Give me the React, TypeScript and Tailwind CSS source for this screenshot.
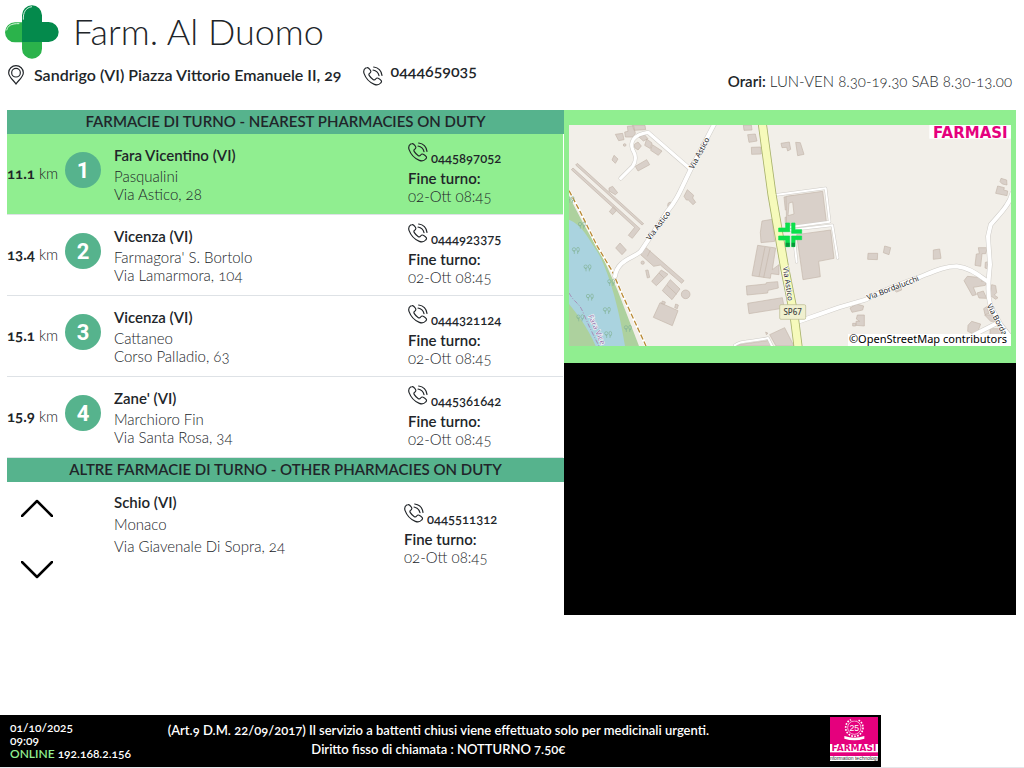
interface Pharmacy { city: string; name: string; address: string; phone: string; until: string; km?: string; }

const nearest: Pharmacy[] = [
  { km: "11.1", city: "Fara Vicentino (VI)", name: "Pasqualini", address: "Via Astico, 28", phone: "0445897052", until: "02-Ott 08:45" },
  { km: "13.4", city: "Vicenza (VI)", name: "Farmagora' S. Bortolo", address: "Via Lamarmora, 104", phone: "0444923375", until: "02-Ott 08:45" },
  { km: "15.1", city: "Vicenza (VI)", name: "Cattaneo", address: "Corso Palladio, 63", phone: "0444321124", until: "02-Ott 08:45" },
  { km: "15.9", city: "Zane' (VI)", name: "Marchioro Fin", address: "Via Santa Rosa, 34", phone: "0445361642", until: "02-Ott 08:45" },
];

const other: Pharmacy = { city: "Schio (VI)", name: "Monaco", address: "Via Giavenale Di Sopra, 24", phone: "0445511312", until: "02-Ott 08:45" };

function PhoneIcon() {
  return (
    <svg viewBox="0 0 60 60" className="size-5 shrink-0" fill="none" stroke="#212529" strokeWidth="3.5" strokeLinecap="round" strokeLinejoin="round" aria-hidden="true">
      <path d="M12 5 C15 4 18 7 21 11 C25 16 24 19 20 22 C17 24 17 26 19 29 C22 34 26 38 31 41 C34 43 36 42 38 39 C41 35 44 35 48 38 L53 42 C57 45 56 48 53 51 C48 57 42 58 34 55 C19 49 8 36 3 22 C1 15 3 9 8 6 Z" />
      <path d="M32 3 C46 5 55 14 57 28" />
      <path d="M30 12 C40 14 46 20 48 29" />
    </svg>
  );
}

function PinIcon() {
  return (
    <svg viewBox="0 0 48 60" className="h-5 w-4 shrink-0" fill="none" stroke="#212529" strokeWidth="3.5" aria-hidden="true">
      <path d="M24 57 C18 47 2 36 2 23 A22 21 0 0 1 46 23 C46 36 30 47 24 57 Z" />
      <circle cx="24" cy="23" r="13" />
    </svg>
  );
}

function CrossLogo() {
  return (
    <svg viewBox="0 0 162 162" className="size-[54px] shrink-0" aria-hidden="true">
      <path d="M51 52 H30 A30 30 0 0 0 30 112 H51 V131 A30 30 0 0 0 111 131 V111 H51 Z" fill="#2bb34b" />
      <path d="M51 31 A30 30 0 0 1 111 31 V51 H131 A30 30 0 0 1 131 111 H51 Z" fill="#048a4c" />
      <path d="M55 44 C54 22 62 8 81 5" fill="none" stroke="#d6efe0" strokeWidth="3" />
      <path d="M5 76 C8 63 18 55 43 56" fill="none" stroke="#d6f5da" strokeWidth="3" />
    </svg>
  );
}

function StreetMap() {
  return (
    <svg viewBox="15 51 1326 663" className="block w-full lining-nums" role="img" aria-label="Mappa della farmacia">
      <rect x="15" y="51" width="1326" height="663" fill="#f2efe9" />

      {/* river and woods */}
      <path d="M15 265 L60 350 L120 455 L160 545 L225 714 H15 Z" fill="#add19e" />
      <path d="M15 335 C55 350 75 395 98 428 C125 470 160 570 183 714 H95 C70 655 40 620 15 588 Z" fill="#aad3df" />
      <path d="M15 555 C35 590 45 580 60 620 C75 655 90 685 105 714" fill="none" stroke="#a68fb8" strokeWidth="3" strokeDasharray="14 5 3 5" />
      <path d="M15 248 L48 310 L100 415 L145 490 L175 560 L246 714" fill="none" stroke="#fff" strokeWidth="8" />
      <path d="M15 248 L48 310 L100 415 L145 490 L175 560 L246 714" fill="none" stroke="#b98a35" strokeWidth="4" strokeDasharray="16 7" />
      <g fill="none" stroke="#83b399" strokeWidth="2">
        {[[36, 428], [71, 480], [78, 568], [129, 608], [133, 680], [54, 352], [49, 630], [192, 662], [20, 275], [142, 524]].map(([x, y]) => (
          <g key={`${x}-${y}`} transform={`translate(${x} ${y})`}>
            <path d="M-5 10 V-1 M5 10 V1 M-5 3 L-10 -1 M5 5 L10 1" />
            <ellipse cx="-6" cy="-4" rx="5" ry="5" />
            <ellipse cx="6" cy="-4" rx="4" ry="6" />
          </g>
        ))}
      </g>

      {/* buildings, western half */}
      <g fill="#d9d0c9" stroke="#c4b6ab" strokeWidth="2">
        <path d="M154 79 L176 76 L180 95 L164 98 Z M182 72 L192 70 L190 55 L209 53 L214 76 L206 87 L184 87 Z M205 52 H243 L245 65 L210 67 Z M225 87 L241 80 L252 92 L238 99 Z M248 93 L264 105 L259 122 L242 112 Z M265 110 L294 129 L283 142 L260 127 Z M211 109 L222 102 L232 114 L222 126 L212 119 Z M214 175 L248 155 L257 170 L222 189 Z M150 142 L162 153 L154 166 L144 156 Z" />
        <circle cx="182" cy="111" r="4" />
        <path d="M35 171 L40 166 L239 347 L234 351 Z M22 185 L27 180 L228 362 L205 391 L193 382 L212 358 Z M135 240 L146 235 L161 254 L154 260 L135 249 Z M136 311 L148 296 L158 307 L146 320 Z" />
        <path d="M370 245 L389 262 L386 270 L395 283 L387 290 L373 276 L367 276 L360 265 Z M312 286 L319 282 L321 300 L311 295 Z" />
        <path d="M168 405 L187 426 L174 440 L155 420 Z M245 418 L360 518 L353 526 L289 471 L269 475 L230 440 Z M245 487 L252 486 L257 508 L250 510 Z M292 486 L312 499 L277 533 L263 520 Z M319 515 L348 543 L324 575 L295 548 Z M288 584 L342 608 L325 653 L268 628 Z M335 588 L343 591 L340 602 L332 599 Z M295 579 L304 582 L302 589 L292 587 Z" />
        <circle cx="236" cy="464" r="5" />
        <circle cx="365" cy="559" r="13" />
        <path d="M309 532 L338 559 M285 495 L299 509 M259 427 L250 445" fill="none" />
        <path d="M538 51 H562 L564 66 L540 67 Z M551 80 L574 78 L579 99 L555 103 Z M562 118 L590 117 L592 138 L563 139 Z M651 106 L676 102 L680 124 L671 129 L668 118 L654 119 Z" />
        <path d="M594 339 L624 334 L632 400 L591 404 L589 373 Z M581 412 L635 420 L625 485 L645 470 L645 500 L621 497 L619 511 L564 503 Z M547 534 L606 528 L607 524 L641 521 L643 540 L612 547 L611 555 L549 561 Z M551 586 L655 569 L661 600 L555 617 Z M603 417 L585 506 M618 420 L599 509" />
        <path d="M660 267 L690 263 V305 L664 306 Z M672 290 L680 288 L682 300 M663 328 L690 322 V348 L664 347 Z M617 680 L662 659 L690 714 H636 Z M515 711 L618 697 L622 714 H515 Z M605 672 L612 676 L607 680 Z" />
      </g>

      {/* buildings, eastern half */}
      <g transform="translate(678 0)" fill="#d9d0c9" stroke="#c4b6ab" strokeWidth="2">
        <path d="M17 103 L31 104 L42 139 L23 143 Z M-12 265 L98 250 L109 341 L-10 358 Z M20 380 L122 366 L132 451 L86 460 L91 506 L39 515 Z" />
        <path d="M-3 285 L8 282 L12 318 L-6 323 Z" fill="#f2efe9" />
        <path d="M234 436 H263 L262 455 L233 454 Z M284 414 L302 419 L297 440 L280 434 Z M430 426 L449 423 L453 451 L430 454 Z M308 544 L333 538 L335 546 L320 552 Z M180 600 L200 588 L221 594 L218 606 L186 613 Z M202 621 L223 621 V654 L198 652 V640 H209 L199 633 Z M188 646 H197 V654 H188 Z" />
        <path d="M633 211 L650 216 L651 231 L637 228 L630 221 Z M623 234 L643 239 L641 246 L653 249 L651 263 L617 256 Z M565 419 H592 L587 437 H576 L572 475 L555 472 L559 438 L568 437 Z M586 463 L595 461 V483 L585 480 Z M522 518 L532 505 L576 509 L574 520 L590 520 L586 532 L550 538 L559 560 L547 563 Z M561 555 L580 549 L590 571 L567 570 Z M605 530 L617 533 L620 554 L613 561 L624 569 L617 574 L600 562 Z M581 602 L590 596 L597 616 L585 620 Z M584 621 L612 620 L630 640 L602 640 Z M534 652 L545 640 L572 648 L565 667 L550 678 L533 670 Z M600 662 H632 V685 H600 Z" />
      </g>

      {/* roads */}
      <g fill="none" strokeLinecap="round" strokeLinejoin="round">
        <g stroke="#cfccc7">
          <path d="M170 211 L206 175 C220 155 215 140 206 125 C198 105 205 80 252 73 L380 184" strokeWidth="13" />
          <path d="M455 40 L380 184 C350 245 340 275 310 310 L230 430 C210 450 160 455 153 505" strokeWidth="15" />
          <path d="M700 642 L825 598 L905 575 C960 545 1020 525 1065 508 C1110 490 1140 475 1178 475 C1220 480 1240 500 1271 520" strokeWidth="15" />
          <path d="M1345 255 C1335 295 1300 325 1280 350 L1272 385 L1278 470 C1272 530 1270 560 1280 595 L1310 650 L1350 700 M1300 645 L1230 680" strokeWidth="15" />
          <path d="M640 260 L785 241 L797 341 L680 357 M680 366 L805 352 L821 450 M690 390 L698 462 M512 712 C530 695 560 703 612 690 L624 714" strokeWidth="9" />
        </g>
        <g stroke="#fff">
          <path d="M170 211 L206 175 C220 155 215 140 206 125 C198 105 205 80 252 73 L380 184" strokeWidth="10" />
          <path d="M455 40 L380 184 C350 245 340 275 310 310 L230 430 C210 450 160 455 153 505" strokeWidth="12" />
          <path d="M700 642 L825 598 L905 575 C960 545 1020 525 1065 508 C1110 490 1140 475 1178 475 C1220 480 1240 500 1271 520" strokeWidth="12" />
          <path d="M1345 255 C1335 295 1300 325 1280 350 L1272 385 L1278 470 C1272 530 1270 560 1280 595 L1310 650 L1350 700 M1300 645 L1230 680" strokeWidth="12" />
          <path d="M640 260 L785 241 L797 341 L680 357 M680 366 L805 352 L821 450 M690 390 L698 462 M512 712 C530 695 560 703 612 690 L624 714" strokeWidth="6" />
        </g>
        <path d="M594 40 L624 260 L662 480 L690 620 L704 730" stroke="#a8b26b" strokeWidth="27" />
        <path d="M594 40 L624 260 L662 480 L690 620 L704 730" stroke="#f6fabb" strokeWidth="22" />
      </g>

      {/* labels */}
      <g fontFamily="'Noto Sans', sans-serif" fontSize="23" fill="#222" stroke="#fff" strokeWidth="3" paintOrder="stroke" textAnchor="middle">
        <text transform="translate(413 139) rotate(-62)">Via Astico</text>
        <text transform="translate(289 357) rotate(-53)">Via Astico</text>
        <text transform="translate(664 528) rotate(81)">Via Astico</text>
        <text transform="translate(989 547) rotate(-21)">Via Bordalucchi</text>
        <text transform="translate(1292 638) rotate(62)">Via Borda</text>
        <text transform="translate(91 668) rotate(66)" fill="#8d6fa8">Fara Vice</text>
      </g>
      <rect x="647" y="590" width="78" height="44" rx="4" fill="#f0f0cf" stroke="#b9ba8e" strokeWidth="2" />
      <text x="686" y="620" textAnchor="middle" fontFamily="'Noto Sans', sans-serif" fontSize="24" fontWeight="500" fill="#444">SP67</text>

      {/* pharmacy marker */}
      <path d="M665 345 H677 V371 H644 V360 H665 Z M683 345 H693 V365 H713 V376 H683 Z M644 384 H677 V416 H665 V396 H644 Z M683 384 H713 V395 H693 V416 H683 Z" fill="#0be04b" stroke="#0be04b" strokeWidth="2" />
      <path d="M665 404 H677 V416 H665 Z M683 404 H693 V416 H683 Z" fill="#07963a" />

      <rect x="1096" y="51" width="245" height="41" fill="#fff" />
      <text x="1219" y="90" textAnchor="middle" fontFamily="'DejaVu Sans', sans-serif" fontSize="45" fontWeight="700" fill="#e5007d">FARMASI</text>
      <rect x="852" y="678" width="489" height="36" fill="#fff" />
      <text x="1092" y="706" textAnchor="middle" fontFamily="'Noto Sans', sans-serif" fontSize="33" fill="#000">©OpenStreetMap contributors</text>
    </svg>
  );
}

function AnniversaryLogo() {
  return (
    <svg viewBox="0 0 144 132" className="h-11 w-12 shrink-0 lining-nums" role="img" aria-label="Farmasi">
      <rect width="144" height="132" fill="#e5007d" />
      <circle cx="73" cy="32" r="26" fill="none" stroke="#fff" strokeWidth="5" strokeDasharray="5 4" />
      <circle cx="73" cy="32" r="20" fill="none" stroke="#fff" strokeWidth="2" />
      <rect x="62" y="2" width="22" height="8" fill="#e5007d" />
      <path d="M43 57 Q73 68 103 57 V65 Q73 75 43 65 Z" fill="#fff" />
      <text x="73" y="41" textAnchor="middle" fontFamily="'Liberation Sans', sans-serif" fontSize="26" fontWeight="400" fill="#fff">25</text>
      <rect y="81" width="144" height="25" fill="#fff" />
      <text x="72" y="103" textAnchor="middle" fontFamily="'DejaVu Sans', sans-serif" fontSize="27" fontWeight="700" fill="#e5007d">FARMASI</text>
      <rect y="117" width="144" height="15" fill="#fff" />
      <text x="72" y="128" textAnchor="middle" fontFamily="'Liberation Sans', sans-serif" fontSize="15" fontWeight="400" fill="#333">information technology</text>
    </svg>
  );
}

function Shift({ phone, until }: { phone: string; until: string }) {
  return (
    <div className="leading-[18px]">
      <div className="flex h-7 items-start gap-[3px] pt-px">
        <PhoneIcon />
        <span className="pt-[7px] text-[13px] font-semibold">{phone}</span>
      </div>
      <div className="font-semibold">Fine turno:</div>
      <div className="font-light">{until}</div>
    </div>
  );
}

function ArrowButton({ label, points }: { label: string; points: string }) {
  return (
    <button type="button" aria-label={label} className="p-3.5">
      <svg viewBox="0 0 32 18" className="h-[18px] w-8" fill="none" stroke="#000" strokeWidth="2.5" strokeLinecap="round" strokeLinejoin="round" aria-hidden="true">
        <polyline points={points} />
      </svg>
    </button>
  );
}

export default function App() {
  return (
    <div className="flex min-h-screen flex-col border-b border-gray-200 bg-white font-['Lato',sans-serif] text-[15px] text-[#212529] oldstyle-nums">
      <header className="pl-[5px] pr-3">
        <div className="flex h-16 items-center gap-3.5">
          <CrossLogo />
          <h1 className="pb-0.5 text-4xl font-light leading-none">Farm. Al Duomo</h1>
        </div>
        <div className="flex h-[46px] items-start justify-between pl-[3px]">
          <div className="flex items-start text-base font-semibold leading-[22px]">
            <div className="flex items-center gap-2.5">
              <PinIcon />
              <span>Sandrigo (VI) Piazza Vittorio Emanuele II, 29</span>
            </div>
            <div className="ml-[21px] flex items-start gap-2">
              <div className="pt-0.5"><PhoneIcon /></div>
              <span className="leading-3.5">0444659035</span>
            </div>
          </div>
          <div className="pt-[5px] font-light leading-6"><span className="font-semibold">Orari:</span> LUN-VEN 8.30-19.30 SAB 8.30-13.00</div>
        </div>
      </header>

      <main className="ml-[7px] mr-2 grid grid-cols-[557fr_452fr] items-start">
        <section>
          <h2 className="bg-[#56b38d] pb-0.5 text-center font-semibold leading-[22px]">FARMACIE DI TURNO - NEAREST PHARMACIES ON DUTY</h2>
          <div className="pr-px">
            <table className="w-full table-fixed border-separate border-spacing-0">
              <colgroup>
                <col className="w-[58px]" />
                <col className="w-[49px]" />
                <col />
                <col className="w-[155px]" />
              </colgroup>
              <tbody>
                {nearest.map((p, i) => (
                  <tr key={p.phone} className={`h-[81px] ${i === 0 ? "bg-[#90ee90]" : ""}`}>
                    <td className="whitespace-nowrap border-b border-[#dee2e6] pb-0.5 font-light"><b className="font-bold">{p.km}</b> km</td>
                    <td className="border-b border-[#dee2e6] pb-2">
                      <div className="flex size-9 items-center justify-center rounded-full bg-[#56b38d] font-['Roboto',sans-serif] text-[22px] font-bold text-white lining-nums">{i + 1}</div>
                    </td>
                    <td className="border-b border-[#dee2e6] pt-[9px] align-top font-light leading-[18px]">
                      <div className="font-semibold leading-6">{p.city}</div>
                      <div>{p.name}</div>
                      <div>{p.address}</div>
                    </td>
                    <td className="border-b border-[#dee2e6] pt-[7px] align-top"><Shift phone={p.phone} until={p.until} /></td>
                  </tr>
                ))}
              </tbody>
            </table>
          </div>

          <h2 className="bg-[#56b38d] pb-0.5 text-center font-semibold leading-[22px]">ALTRE FARMACIE DI TURNO - OTHER PHARMACIES ON DUTY</h2>
          <div className="flex">
            <div className="flex w-[107px] flex-col items-start gap-4 pt-[3px]">
              <ArrowButton label="Precedente" points="1,17 16,2 31,17" />
              <ArrowButton label="Successiva" points="1,1 16,16 31,1" />
            </div>
            <div className="flex-1 pt-[9px] font-light leading-[22px]">
              <div className="font-semibold">{other.city}</div>
              <div>{other.name}</div>
              <div>{other.address}</div>
            </div>
            <div className="w-40 pt-5"><Shift phone={other.phone} until={other.until} /></div>
          </div>
        </section>

        <aside>
          <div className="bg-[#90ee90] px-[5px] pb-[17px] pt-[15px]">
            <StreetMap />
          </div>
          <div className="h-[252px] bg-black" />
        </aside>
      </main>

      <footer className="mt-auto flex h-[52px] w-[86%] items-start bg-black text-[13px] font-semibold text-white">
        <div className="w-32 shrink-0 whitespace-nowrap pl-2.5 pt-1.5 text-xs leading-[13px]">
          <div>01/10/2025</div>
          <div>09:09</div>
          <div><span className="text-[#90ee90]">ONLINE</span> 192.168.2.156</div>
        </div>
        <div className="flex-1 pt-1.5 text-center leading-[19px]">
          <p>(Art.9 D.M. 22/09/2017) Il servizio a battenti chiusi viene effettuato solo per medicinali urgenti.</p>
          <p>Diritto fisso di chiamata : NOTTURNO 7.50€</p>
        </div>
        <div className="flex w-[132px] shrink-0 justify-end pr-[3px] pt-0.5"><AnniversaryLogo /></div>
      </footer>
    </div>
  );
}
